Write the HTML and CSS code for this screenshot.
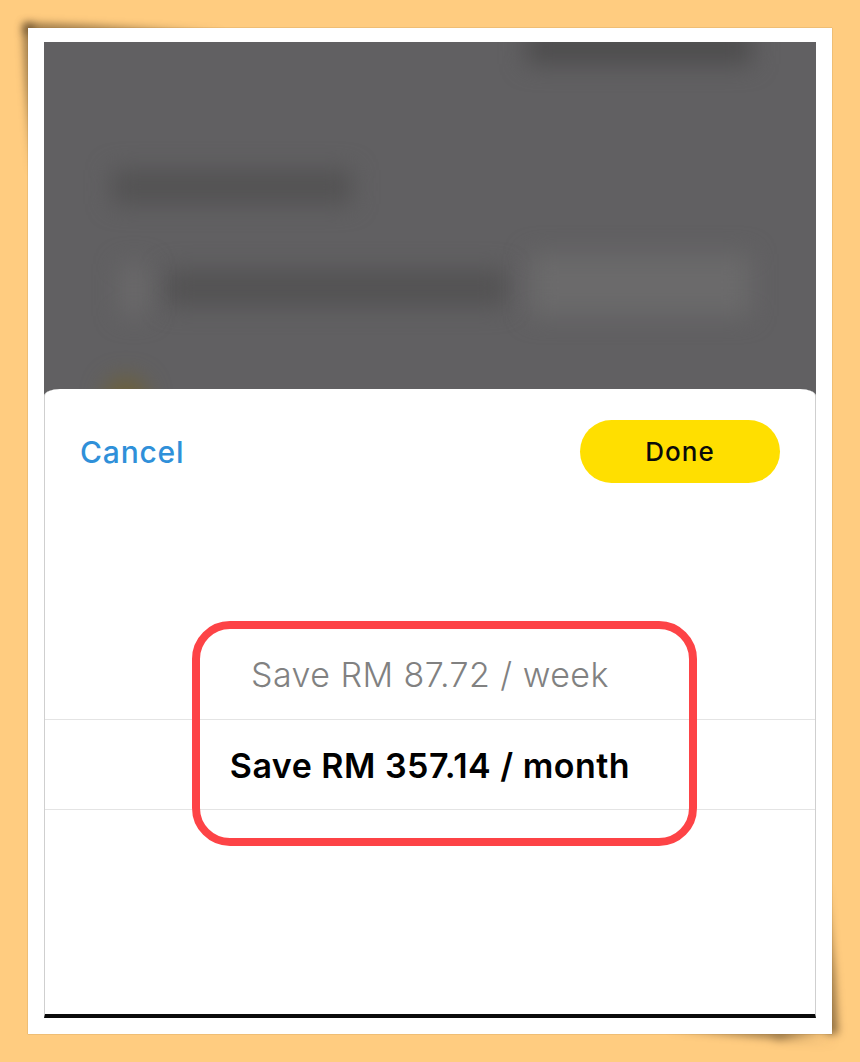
FILE: index.html
```html
<!DOCTYPE html>
<html lang="en">
<head>
<meta charset="utf-8">
<title>Save amount picker</title>
<link rel="stylesheet" href="styles.css">
</head>
<body>
<div class="page">
  <div class="frame">
    <span class="curl curl-top"></span>
    <span class="curl curl-left"></span>
    <span class="curl curl-right"></span>
    <span class="curl curl-bottom"></span>
    <div class="paper">
      <div class="screen">
        <div class="backdrop">
          <span class="blob blob-head"></span>
          <span class="blob blob-title"></span>
          <span class="blob blob-row"></span>
          <span class="blob blob-light"></span>
          <span class="blob blob-knob"></span>
          <span class="blob blob-coin"></span>
        </div>
        <div class="sheet">
          <div class="sheet-head">
            <span class="cancel">Cancel</span>
            <span class="done">Done</span>
          </div>
          <div class="wheel">
            <div class="wheel-item wheel-item-muted">Save RM 87.72 / week</div>
            <div class="wheel-item wheel-item-active">Save RM 357.14 / month</div>
          </div>
          <div class="highlight"></div>
        </div>
      </div>
    </div>
  </div>
</div>
</body>
</html>
```
FILE: styles.css
```css
* { box-sizing: border-box; }
html, body { margin: 0; height: 100%; }
body { background: #ffcc80; font-family: "Inter", "Noto Sans", sans-serif; overflow: hidden; }
.page { height: 1062px; padding: 28px; }
.frame { position: relative; height: 1006px; }
.paper {
  position: relative;
  height: 100%;
  background: #fff;
  padding: 14px 16px 16px;
  box-shadow: 0 0 1px rgba(120, 90, 40, .7);
}
.curl { position: absolute; display: block; filter: blur(4px); }
.curl::before { content: ""; display: block; width: 100%; height: 100%; background: rgba(70, 50, 25, .6); }
.curl-top { left: -4px; top: -5px; width: 200px; height: 10px; }
.curl-top::before { clip-path: polygon(0 0, 30% 25%, 100% 100%, 0 100%); }
.curl-left { left: -5px; top: -4px; width: 10px; height: 150px; }
.curl-left::before { clip-path: polygon(0 0, 100% 0, 100% 100%, 30% 40%); }
.curl-right { right: -6px; bottom: 0; width: 12px; height: 150px; }
.curl-right::before { clip-path: polygon(100% 100%, 0 100%, 0 0, 70% 60%); }
.curl-bottom { right: -6px; bottom: -9px; width: 170px; height: 14px; }
.curl-bottom::before { clip-path: polygon(100% 100%, 0 0, 100% 0, 60% 75%); }
.screen { height: 100%; display: flex; flex-direction: column; }
.backdrop {
  position: relative;
  height: 354px;
  margin-bottom: -7px;
  background: #616062;
  overflow: hidden;
}
.blob { position: absolute; display: block; filter: blur(12px); }
.blob-head { left: 482px; top: -12px; width: 226px; height: 34px; background: #4d4c4d; }
.blob-title { left: 68px; top: 128px; width: 240px; height: 34px; background: #535253; }
.blob-row { left: 122px; top: 228px; width: 340px; height: 36px; background: #535253; }
.blob-light { left: 486px; top: 212px; width: 220px; height: 62px; background: #6b6a6b; }
.blob-knob { left: 76px; top: 222px; width: 28px; height: 52px; background: #6a696a; }
.blob-coin { left: 62px; top: 336px; width: 40px; height: 40px; background: #6e6135; border-radius: 50%; }
.sheet {
  position: relative;
  flex: 1;
  background: #fff;
  border-radius: 16px 16px 0 0 / 7px 7px 0 0;
  border-left: 1px solid #cfcfcf;
  border-right: 1px solid #cfcfcf;
  border-bottom: 4px solid #0a0a0a;
}
.sheet-head {
  display: flex;
  justify-content: space-between;
  align-items: center;
  padding: 31px 35px 0 35px;
}
.cancel { font-size: 30px; font-weight: 500; color: #2f90d9; letter-spacing: .8px; }
.done {
  width: 200px;
  height: 63px;
  border-radius: 32px;
  background: #ffdf00;
  color: #0a0a0a;
  font-size: 26px;
  font-weight: 500;
  display: flex;
  align-items: center;
  justify-content: center;
  letter-spacing: 1px;
}
.wheel { margin-top: 146px; }
.wheel-item { height: 90px; display: flex; align-items: center; justify-content: center; font-size: 34px; border-bottom: 1px solid #e4e4e4; }
.wheel-item-muted { height: 91px; color: #818181; font-weight: 300; letter-spacing: .45px; }
.wheel-item-active { color: #000; font-weight: 600; letter-spacing: .5px; padding-top: 2px; }
.highlight {
  position: absolute;
  left: 147px;
  top: 232px;
  width: 505px;
  height: 225px;
  border: 8px solid #fd4346;
  border-radius: 38px;
}
```
